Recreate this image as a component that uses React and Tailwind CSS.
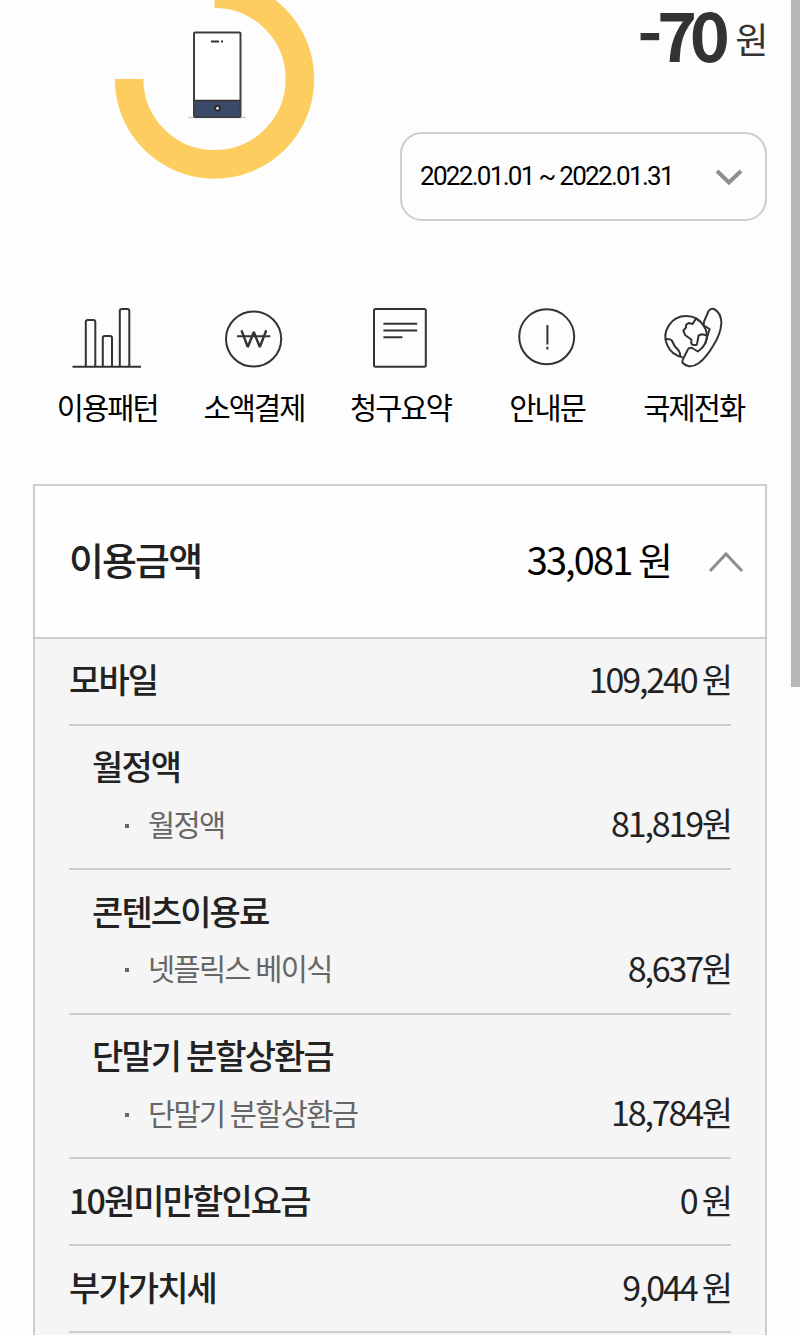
import React from 'react'

const PatternIcon = () => (
  <svg width="80" height="64" viewBox="0 0 80 64" fill="none" stroke="#333" strokeWidth="2">
    <path d="M5.5 60.8H74" />
    <path d="M18.8 60V16Q18.8 14 20.8 14H26.3Q28.3 14 28.3 16V60" />
    <path d="M35.8 60V32Q35.8 30 37.8 30H43Q45 30 45 32V60" />
    <path d="M52.8 60V5Q52.8 3 54.8 3H60.3Q62.3 3 62.3 5V60" />
  </svg>
)

const PaymentIcon = () => (
  <svg width="80" height="64" viewBox="0 0 80 64" fill="none" stroke="#333" strokeWidth="2">
    <circle cx="39.6" cy="33" r="27.6" />
    <path d="M23 30.3H56.3" />
    <path d="M27.5 24.3L33.8 41L39.8 26L45.8 41L52.3 24.3" strokeWidth="2.4" strokeLinejoin="bevel" />
  </svg>
)

const SummaryIcon = () => (
  <svg width="80" height="64" viewBox="0 0 80 64" fill="none" stroke="#333" strokeWidth="2">
    <rect x="14" y="3" width="51.8" height="57.8" rx="1.5" />
    <path d="M23.4 17.8H57.2M23.4 24.5H57.2M23.4 31.3H42.4" />
  </svg>
)

const NoticeIcon = () => (
  <svg width="80" height="64" viewBox="0 0 80 64" fill="none" stroke="#333" strokeWidth="2">
    <circle cx="39.7" cy="30.8" r="27.5" />
    <path d="M40.4 19V38.5M40.4 40.8V43.4" />
  </svg>
)

const GlobalCallIcon = () => (
  <svg width="80" height="64" viewBox="0 0 80 64" fill="none" stroke="#333" strokeWidth="2" strokeLinejoin="round">
    {/* Globe */}
    <path d="M28.6 51.2A20.7 20.7 0 1 1 49.6 19.7Q55.5 28 51.3 37.3" />
    <path d="M12 33Q16.5 33 18 34.7L20.6 40L24.6 44.5Q26.5 47 26.3 50.5" />
    <path d="M46 15.5L42 12.5L38.6 18L34.5 17L32 19V21.5L29.3 24.7L31.3 29.3L37.3 33.5V37.3Q38 39 39.6 39H42Q43.3 38.5 43.3 36.5L44.6 29.5L48 28.3L53.3 29.5" />
    {/* Handset */}
    <path d="M49.6 19.3L50 15.7L54.6 5Q56.3 2.3 60 3Q67 6.5 67.4 17Q66.5 28.5 59.6 39Q52.5 51.5 44.6 57.3Q39.5 60.8 35 60.3Q31 59.5 28.8 57Q28 55.5 28.8 53.5L34 43.3Q35.5 41 38 42L44 45.5Q49 42 51.3 37.3L55.6 23Z" />
  </svg>
)

const menus = [
  { icon: PatternIcon, label: '이용패턴' },
  { icon: PaymentIcon, label: '소액결제' },
  { icon: SummaryIcon, label: '청구요약' },
  { icon: NoticeIcon, label: '안내문' },
  { icon: GlobalCallIcon, label: '국제전화' },
]

const groups = [
  { title: '월정액', item: '월정액', price: '81,819원' },
  { title: '콘텐츠이용료', item: '넷플릭스 베이식', price: '8,637원' },
  { title: '단말기 분할상환금', item: '단말기 분할상환금', price: '18,784원' },
]

const UsageDonut = () => (
  <svg className="shrink-0" width="320" height="180" viewBox="0 0 320 180" fill="none">
    <path d="M214.5 -6.4A85.4 85.4 0 1 1 129.1 79" stroke="#fecd60" strokeWidth="28.6" />
    {/* Phone */}
    <path d="M188 117.5H246" stroke="#cfcfcf" strokeWidth="1.5" />
    <rect x="194" y="32.5" width="46.5" height="84.5" rx="1" fill="#fff" />
    <rect x="194" y="100.5" width="46.5" height="16.5" fill="#3c4a69" />
    <path d="M194 100.5H240.5" stroke="#333" strokeWidth="1.5" />
    <rect x="194" y="32.5" width="46.5" height="84.5" rx="1" stroke="#3f3d45" strokeWidth="2" />
    <path d="M211 41.5H219M221 41.5H223" stroke="#333" strokeWidth="2" />
    <circle cx="217.5" cy="108.3" r="2.4" fill="#fff" stroke="#2b2b33" strokeWidth="2" />
  </svg>
)

const TotalRow = ({ title, price }) => (
  <div className="h-[86.7px] pb-[5px] flex items-center justify-between border-b-2 border-[#cdcdcd]">
    <span className="font-medium tracking-[-1.9px] text-[#222]">{title}</span>
    <span className="tracking-[-2.15px] text-[#222]">{price}</span>
  </div>
)

const GroupRow = ({ title, item, price }) => (
  <div className="h-[144.6px] pt-[15px] border-b-2 border-[#cdcdcd]">
    <div className="h-[50px] pl-[23px] flex items-center font-medium tracking-[-1.9px] text-[#222]">{title}</div>
    <div className="h-[64px] pl-[56px] flex items-center">
      <span className="w-1 h-1 mt-[6px] mr-[19px] bg-[#666]"></span>
      <span className="flex-1 text-[29.5px] tracking-[-1.6px] text-[#666]">{item}</span>
      <span className="tracking-[-2.15px] text-[#222]">{price}</span>
    </div>
  </div>
)

const App = () => {
  return (
    <div className="relative w-[800px] h-[1335px] overflow-hidden bg-[#fdfdfd] font-['Noto_Sans_CJK_KR',sans-serif] whitespace-nowrap">
      {/* Usage chart and billing period */}
      <div className="h-[300px] pr-[33px] flex justify-between">
        <UsageDonut />
        <div className="w-[367px] flex flex-col">
          <div className="h-[132px] flex items-start justify-end text-[#333]">
            <strong className="text-[68px] leading-[65px] font-bold tracking-[-7.5px]">
              <span className="relative -top-[6px] tracking-[-5.5px]">-</span>70
            </strong>
            <span className="ml-[13px] text-[36px] leading-[76px] tracking-[-1.4px]">원</span>
          </div>
          <button className="h-[89px] pl-[18px] pr-[22px] flex items-center justify-between rounded-[22px] border-2 border-[#cdcdcd] text-black">
            <span className="font-[Roboto,sans-serif] text-[26px] tracking-[-0.065em]">2022.01.01 ~ 2022.01.31</span>
            <svg width="28" height="18" viewBox="0 0 28 18" fill="none" stroke="#8e8e8e" strokeWidth="4">
              <path d="M2 3L14 14.5L26 3" />
            </svg>
          </button>
        </div>
      </div>

      {/* Shortcuts */}
      <div className="h-[184px] ml-[34px] w-[733px] pt-[6px] grid grid-cols-5">
        {menus.map((menu) => (
          <div key={menu.label} className="flex flex-col items-center">
            <menu.icon />
            <span className="mt-[14px] text-[29.5px] leading-[44px] tracking-[-1.9px] text-black">{menu.label}</span>
          </div>
        ))}
      </div>

      {/* Charges */}
      <div className="ml-[33px] w-[734px] h-[900px] border-2 border-[#cdcdcd] bg-[#f5f5f5]">
        <div className="h-[153px] pl-[34px] pr-[21px] pb-[7px] flex items-center border-b-2 border-[#cdcdcd] bg-[#fefefe] text-[38px] tracking-[-1.9px]">
          <h2 className="flex-1 font-medium text-[#222]">이용금액</h2>
          <span className="mr-[37px] text-black">33,081 원</span>
          <svg className="mt-[7px]" width="36" height="22" viewBox="0 0 36 22" fill="none" stroke="#8e8e8e" strokeWidth="3">
            <path d="M2 20L18 3L34 20" />
          </svg>
        </div>
        <div className="px-[34px] text-[34px]">
          <TotalRow title="모바일" price="109,240 원" />
          {groups.map((group) => (
            <GroupRow key={group.title} {...group} />
          ))}
          <TotalRow title="10원미만할인요금" price="0 원" />
          <TotalRow title="부가가치세" price="9,044 원" />
        </div>
      </div>

      {/* Scrollbar */}
      <div className="absolute top-0 right-0 w-[9px] h-[687px] bg-[#b6b6b6]"></div>
    </div>
  )
}

export default App
